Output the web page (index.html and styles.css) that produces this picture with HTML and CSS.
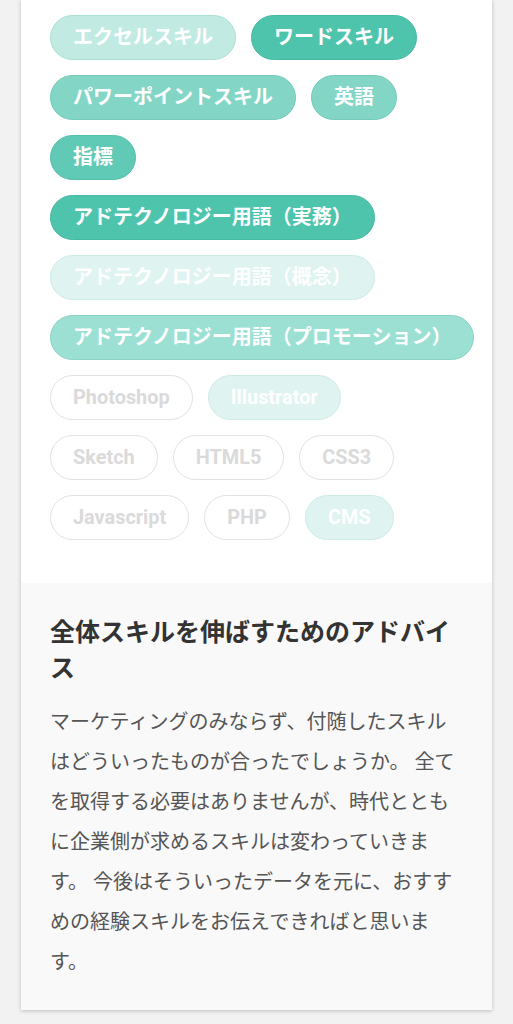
FILE: index.html
```html
<!DOCTYPE html>
<html lang="ja">
<head>
<meta charset="utf-8">
<link rel="stylesheet" href="styles.css">
</head>
<body>
<div class="page">
  <div class="card">
    <div class="tags">
      <span class="tag t35">エクセルスキル</span>
      <span class="tag t100">ワードスキル</span>
      <span class="tag t70">パワーポイントスキル</span>
      <span class="tag t70">英語</span>
      <span class="tag t90">指標</span>
      <span class="tag t100">アドテクノロジー用語（実務）</span>
      <span class="tag t18">アドテクノロジー用語（概念）</span>
      <span class="tag t55">アドテクノロジー用語（プロモーション）</span>
      <span class="tag en off">Photoshop</span>
      <span class="tag en t18">Illustrator</span>
      <span class="tag en off">Sketch</span>
      <span class="tag en off">HTML5</span>
      <span class="tag en off">CSS3</span>
      <span class="tag en off">Javascript</span>
      <span class="tag en off">PHP</span>
      <span class="tag en t18">CMS</span>
    </div>
    <div class="advice">
      <h2 class="advice-title">全体スキルを伸ばすためのアドバイス</h2>
      <p class="advice-text">マーケティングのみならず、付随したスキルはどういったものが合ったでしょうか。 全てを取得する必要はありませんが、時代とともに企業側が求めるスキルは変わっていきます。 今後はそういったデータを元に、おすすめの経験スキルをお伝えできればと思います。</p>
    </div>
  </div>
</div>
</body>
</html>
```

FILE: styles.css
```css
html, body {
  margin: 0;
  padding: 0;
  background: #f2f2f2;
}
body {
  font-family: Roboto, "Noto Sans CJK JP", sans-serif;
}
.page {
  padding: 0 21px 16px;
}
.card {
  background: #fff;
  box-shadow: 0 1px 4px rgba(0, 0, 0, 0.22);
}
.tags {
  display: flex;
  flex-wrap: wrap;
  padding: 15px 28px 28px 29px;
}
.tag {
  display: inline-block;
  height: 43px;
  line-height: 43px;
  padding: 0 22px;
  margin: 0 15px 15px 0;
  border-radius: 23px;
  font-size: 20px;
  font-weight: 700;
  color: #fff;
  white-space: nowrap;
  border: 1px solid transparent;
}
.en {
  font-size: 19.9px;
}
.t100 { background: #4fc4ad; border-color: #46b9a2; }
.t90  { background: #61cab6; border-color: #54bfaa; }
.t70  { background: #83d5c6; border-color: #72cbb9; }
.t55  { background: #9cdfd3; border-color: #8ad4c6; }
.t35  { background: #c1eae3; border-color: #abdfd5; }
.t18  { background: #dff3f0; border-color: #cdebe5; }
.off  { background: #fff; border-color: #e2e2e2; color: #dadada; }
.advice {
  background: #f9f9f9;
  padding: 32px 28px 28px 29px;
}
.advice-title {
  margin: 0;
  font-size: 25px;
  line-height: 36px;
  font-weight: 700;
  color: #333;
}
.advice-text {
  margin: 15px 0 0;
  font-size: 20px;
  line-height: 40px;
  color: #555;
}
```
